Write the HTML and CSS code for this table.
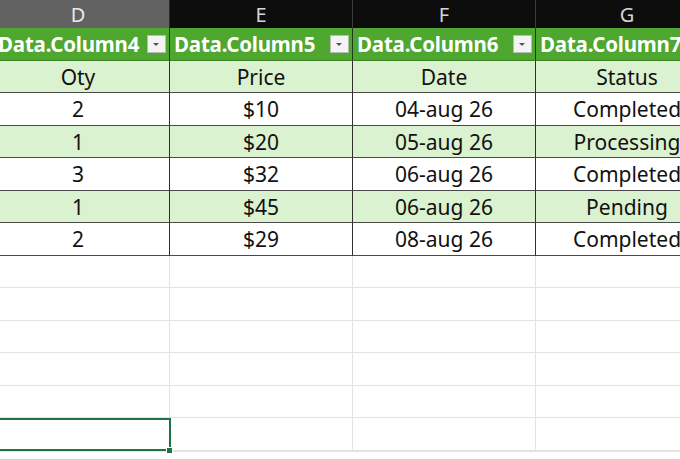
FILE: index.html
```html
<!DOCTYPE html>
<html>
<head>
<meta charset="utf-8">
<link rel="stylesheet" href="styles.css">
</head>
<body>
<div class="viewport">
  <div class="sheet">
    <div class="colhead active">D</div>
    <div class="colhead">E</div>
    <div class="colhead">F</div>
    <div class="colhead">G</div>

    <div class="th"><span class="th-label">Data.Column4</span><span class="dd"></span></div>
    <div class="th"><span class="th-label">Data.Column5</span><span class="dd"></span></div>
    <div class="th"><span class="th-label">Data.Column6</span><span class="dd"></span></div>
    <div class="th"><span class="th-label">Data.Column7</span><span class="dd"></span></div>

    <div class="td band">Oty</div>
    <div class="td band">Price</div>
    <div class="td band">Date</div>
    <div class="td band">Status</div>

    <div class="td">2</div>
    <div class="td">$10</div>
    <div class="td">04-aug 26</div>
    <div class="td">Completed</div>

    <div class="td band">1</div>
    <div class="td band">$20</div>
    <div class="td band">05-aug 26</div>
    <div class="td band">Processing</div>

    <div class="td">3</div>
    <div class="td">$32</div>
    <div class="td">06-aug 26</div>
    <div class="td">Completed</div>

    <div class="td band">1</div>
    <div class="td band">$45</div>
    <div class="td band">06-aug 26</div>
    <div class="td band">Pending</div>

    <div class="td">2</div>
    <div class="td">$29</div>
    <div class="td">08-aug 26</div>
    <div class="td">Completed</div>

    <div class="ec"></div><div class="ec"></div><div class="ec"></div><div class="ec"></div>
    <div class="ec"></div><div class="ec"></div><div class="ec"></div><div class="ec"></div>
    <div class="ec"></div><div class="ec"></div><div class="ec"></div><div class="ec"></div>
    <div class="ec"></div><div class="ec"></div><div class="ec"></div><div class="ec"></div>
    <div class="ec"></div><div class="ec"></div><div class="ec"></div><div class="ec"></div>
    <div class="ec sel"><span class="handle"></span></div><div class="ec"></div><div class="ec"></div><div class="ec"></div>
    <div class="ec"></div><div class="ec"></div><div class="ec"></div><div class="ec"></div>
  </div>
</div>
</body>
</html>
```

FILE: styles.css
```css
html, body {
  margin: 0;
  padding: 0;
  background: #ffffff;
}

.viewport {
  width: 680px;
  height: 459px;
  overflow: hidden;
  font-family: "Noto Sans", "Open Sans", sans-serif;
}

.sheet {
  display: grid;
  grid-template-columns: repeat(4, 183px);
  grid-template-rows: 28px repeat(13, 32.5px);
  margin-left: -13px;
  width: 732px;
}

.colhead {
  background: #0d0d0d;
  color: #d6d6d6;
  font-size: 20px;
  display: flex;
  align-items: center;
  justify-content: center;
  border-right: 1px solid #3c3c3c;
  box-sizing: border-box;
}

.colhead.active {
  background: #626262;
  color: #e8e8e8;
  border-right-color: #2a2a2a;
}

.th {
  background: #4ea72e;
  color: #ffffff;
  font-weight: 700;
  font-size: 20.5px;
  display: flex;
  align-items: center;
  justify-content: space-between;
  padding: 0 3px 0 4px;
  box-sizing: border-box;
  border-right: 1px solid #1f3d14;
  border-bottom: 1px solid #3a7f22;
  white-space: nowrap;
  overflow: hidden;
}

.th:nth-child(5) {
  padding-left: 11px;
}

.th-label {
  letter-spacing: -0.2px;
}

.dd {
  flex: none;
  width: 19px;
  height: 18px;
  background: #f4f4f4;
  border: 1px solid #b9b9b9;
  box-sizing: border-box;
  position: relative;
}

.dd::after {
  content: "";
  position: absolute;
  left: 5px;
  top: 7px;
  border-left: 3.5px solid transparent;
  border-right: 3.5px solid transparent;
  border-top: 3.5px solid #555555;
}

.td {
  display: flex;
  align-items: center;
  justify-content: center;
  font-size: 21px;
  color: #111111;
  background: #ffffff;
  border-right: 1px solid #2f2f2f;
  border-bottom: 1px solid #4a4a4a;
  box-sizing: border-box;
  white-space: nowrap;
  overflow: hidden;
  padding-top: 1px;
}

.td.band {
  background: #daf2d0;
}

.ec {
  background: #ffffff;
  border-right: 1px solid #e2e2e2;
  border-bottom: 1px solid #e2e2e2;
  box-sizing: border-box;
}

.ec.sel {
  position: relative;
  z-index: 2;
  border: 2px solid #217346;
  border-left: none;
  margin-right: -1px;
}

.handle {
  position: absolute;
  right: -4px;
  bottom: -5px;
  width: 7px;
  height: 7px;
  background: #217346;
  box-sizing: border-box;
  border: 1px solid #ffffff;
}
```
